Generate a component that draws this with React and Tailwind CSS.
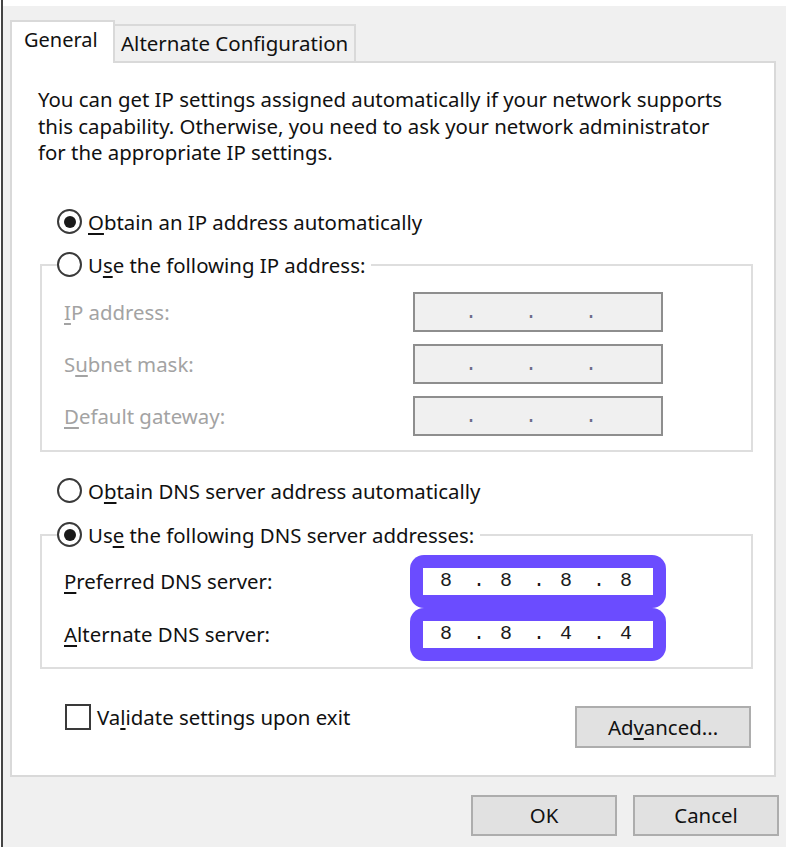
import React from 'react';

const font = { fontFamily: '"Noto Sans", "Open Sans", sans-serif' };

const Radio = ({ checked }) => (
  <span className="w-[25px] h-[25px] rounded-full border-2 border-[#3a3a3a] bg-white flex items-center justify-center shrink-0">
    {checked && <span className="w-[12px] h-[12px] rounded-full bg-[#1a1a1a]"></span>}
  </span>
);

const Key = ({ children }) => <u className="underline underline-offset-[3px] decoration-[1.5px]">{children}</u>;

const IpSegments = ({ values, dim }) => (
  <div className={`flex items-center h-full pl-[6px] font-['Liberation_Mono',monospace] text-[20px] ${dim ? 'text-[#6d6d8a] pt-[3px]' : 'text-[#1a1a1a]'}`}>
    {[0, 1, 2, 3].map((i) => (
      <React.Fragment key={i}>
        <span className="w-[34px] text-center">{values ? values[i] : ''}</span>
        {i < 3 && <span className="w-[26px] text-center pl-[6px]">.</span>}
      </React.Fragment>
    ))}
  </div>
);

const GrayInput = () => (
  <div className="w-[250px] h-[40px] border-2 border-[#8e8e8e] bg-[#f0f0f0]">
    <IpSegments dim />
  </div>
);

const DnsInput = ({ values }) => (
  <div className="w-[256px] h-[53px] rounded-[14px] bg-[#6b4cff] p-[13px] ml-[-3px]">
    <div className="h-full bg-white">
      <IpSegments values={values} />
    </div>
  </div>
);

export default function App() {
  return (
    <div className="bg-white h-[847px] pl-[1px] text-[20.4px] leading-[26px] text-[#111]" style={font}>
      <div className="h-full border-l-2 border-[#444] flex flex-col">
        <div className="h-[6px] bg-white"></div>
        <div className="flex-1 bg-[#f0f0f0] pl-[7px] pr-[7px] pt-[14px]">
          {/* tabs */}
          <div className="flex items-end">
            <div className="relative z-10 w-[105px] h-[43px] mb-[-2px] bg-white border-2 border-b-0 border-[#d9d9d9] pl-[12px] pt-[5px] text-[20px]">
              General
            </div>
            <div className="w-[241px] h-[37px] border-2 border-b-0 border-l-0 border-[#d9d9d9] pl-[6px] pt-[4px] text-[20.5px]">
              Alternate Configuration
            </div>
          </div>

          {/* panel */}
          <div className="mr-[3px] bg-white border-2 border-[#d9d9d9] pl-[26px] pr-[21px] pt-[23px] pb-[27px]">
            <p className="leading-[26.5px]">
              You can get IP settings assigned automatically if your network supports<br />
              this capability. Otherwise, you need to ask your network administrator<br />
              for the appropriate IP settings.
            </p>

            <div className="mt-[43px] ml-[19px] flex items-center gap-[6px] h-[26px]">
              <Radio checked />
              <span><Key>O</Key>btain an IP address automatically</span>
            </div>

            <fieldset className="mt-[17px] ml-[2px] border-2 border-[#dedede] pb-[14px]">
              <legend className="ml-[15px] pr-[6px]">
                <div className="flex items-center gap-[6px] h-[26px]">
                  <Radio />
                  <span>U<Key>s</Key>e the following IP address:</span>
                </div>
              </legend>
              <div className="mt-[14px] pl-[22px] flex flex-col gap-[12px] text-[#a3a3a3]">
                <div className="flex items-center h-[40px]">
                  <span className="w-[349px]"><Key>I</Key>P address:</span>
                  <GrayInput />
                </div>
                <div className="flex items-center h-[40px]">
                  <span className="w-[349px]">S<Key>u</Key>bnet mask:</span>
                  <GrayInput />
                </div>
                <div className="flex items-center h-[40px]">
                  <span className="w-[349px]"><Key>D</Key>efault gateway:</span>
                  <GrayInput />
                </div>
              </div>
            </fieldset>

            <div className="mt-[26px] ml-[19px] flex items-center gap-[6px] h-[26px]">
              <Radio />
              <span>O<Key>b</Key>tain DNS server address automatically</span>
            </div>

            <fieldset className="mt-[18px] ml-[2px] border-2 border-[#dedede] pb-[6px]">
              <legend className="ml-[15px] pr-[6px]">
                <div className="flex items-center gap-[6px] h-[26px]">
                  <Radio checked />
                  <span>Us<Key>e</Key> the following DNS server addresses:</span>
                </div>
              </legend>
              <div className="mt-[7px] pl-[22px] flex flex-col">
                <div className="flex items-center">
                  <span className="w-[349px]"><Key>P</Key>referred DNS server:</span>
                  <DnsInput values={['8', '8', '8', '8']} />
                </div>
                <div className="flex items-center">
                  <span className="w-[349px]"><Key>A</Key>lternate DNS server:</span>
                  <DnsInput values={['8', '8', '4', '4']} />
                </div>
              </div>
            </fieldset>

            <div className="mt-[35px] flex items-start justify-between">
              <div className="ml-[27px] flex items-center gap-[6px] h-[26px]">
                <span className="w-[26px] h-[26px] border-2 border-[#3a3a3a] bg-white"></span>
                <span>Va<Key>l</Key>idate settings upon exit</span>
              </div>
              <button className="mt-[2px] mr-[2px] w-[176px] h-[42px] bg-[#e1e1e1] border-2 border-[#adadad]">
                Ad<Key>v</Key>anced...
              </button>
            </div>
          </div>

          {/* dialog buttons */}
          <div className="mt-[18px] flex justify-end gap-[16px]">
            <button className="w-[146px] h-[41px] bg-[#e1e1e1] border-2 border-[#adadad]">OK</button>
            <button className="w-[146px] h-[41px] bg-[#e1e1e1] border-2 border-[#adadad]">Cancel</button>
          </div>
        </div>
      </div>
    </div>
  );
}
